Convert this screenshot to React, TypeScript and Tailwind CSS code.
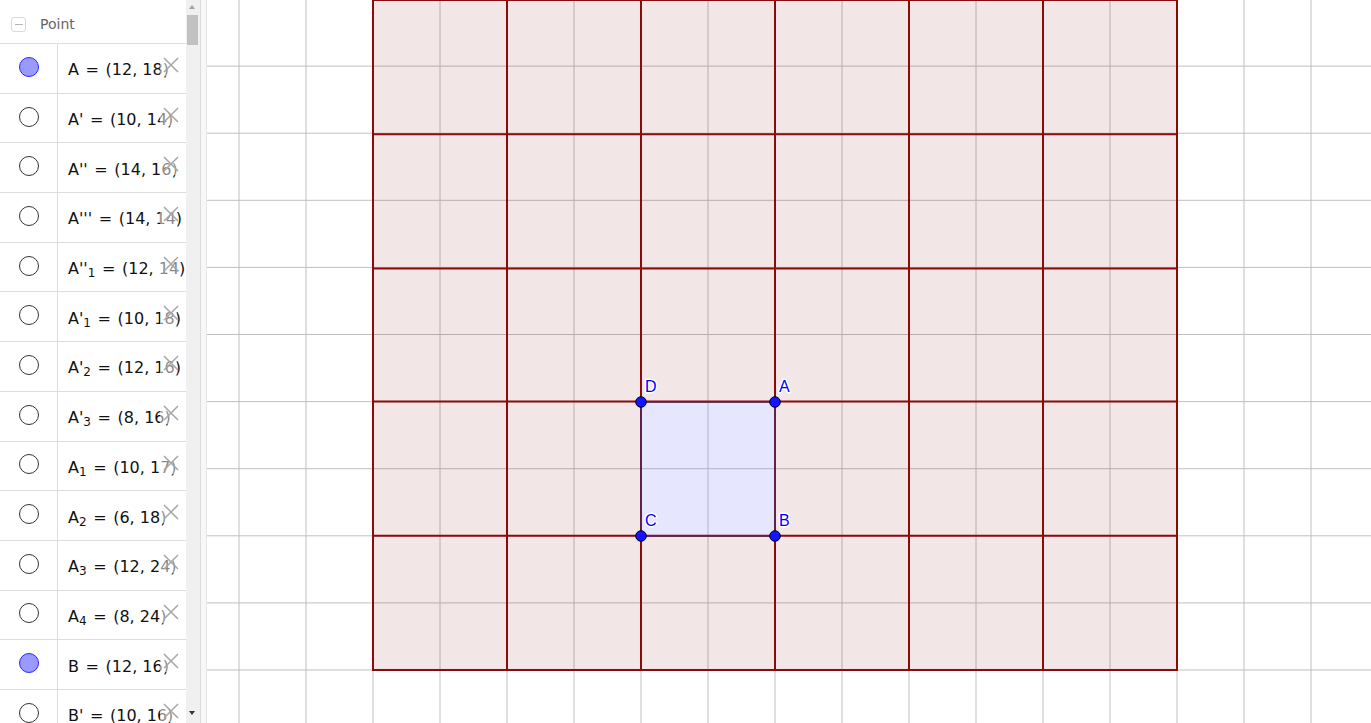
import React from 'react';

type Row = {
  name: string;
  primes?: string;
  sub?: string;
  coords: string;
  shown?: boolean;
};

const rows: Row[] = [
  { name: 'A', coords: '(12, 18)', shown: true },
  { name: 'A', primes: "'", coords: '(10, 14)' },
  { name: 'A', primes: "''", coords: '(14, 16)' },
  { name: 'A', primes: "'''", coords: '(14, 14)' },
  { name: 'A', primes: "''", sub: '1', coords: '(12, 14)' },
  { name: 'A', primes: "'", sub: '1', coords: '(10, 18)' },
  { name: 'A', primes: "'", sub: '2', coords: '(12, 16)' },
  { name: 'A', primes: "'", sub: '3', coords: '(8, 16)' },
  { name: 'A', sub: '1', coords: '(10, 17)' },
  { name: 'A', sub: '2', coords: '(6, 18)' },
  { name: 'A', sub: '3', coords: '(12, 24)' },
  { name: 'A', sub: '4', coords: '(8, 24)' },
  { name: 'B', coords: '(12, 16)', shown: true },
  { name: 'B', primes: "'", coords: '(10, 16)' },
];

const STEP_X = 67;
const STEP_Y = 67.1;
const vLines = Array.from({ length: 17 }, (_, k) => 239 + STEP_X * k);
const hLines = Array.from({ length: 10 }, (_, k) => 670 - STEP_Y * k);
const redV = [373, 507, 641, 775, 909, 1043, 1177];
const redH = [0, 134.2, 268.4, 401.6, 535.8, 670];

const points = [
  { label: 'D', x: 641, y: 402 },
  { label: 'A', x: 775, y: 402 },
  { label: 'C', x: 641, y: 536 },
  { label: 'B', x: 775, y: 536 },
];

function AlgebraRow({ row }: { row: Row }) {
  return (
    <div className="relative flex h-[49.7px] shrink-0 border-b border-[#dddddd]">
      <div className="flex w-[58px] shrink-0 items-center justify-center border-r border-[#dddddd] pb-[3px]">
        {row.shown ? (
          <div className="h-[20px] w-[20px] rounded-full border border-[#2a2aff] bg-[#9999ff]" />
        ) : (
          <div className="h-[20px] w-[20px] rounded-full border-[1.3px] border-[#333333] bg-white" />
        )}
      </div>
      <div className="flex min-w-0 flex-1 items-center overflow-hidden whitespace-nowrap pl-[10px] pt-[4px] text-[16px] leading-[20px] text-[#111]">
        <span>
          {row.name}
          {row.primes}
          {row.sub && <sub className="text-[12px]">{row.sub}</sub>}
          <span className="px-[1.5px]">{' = '}</span>
          {row.coords}
        </span>
      </div>
      <div className="absolute left-[160px] top-[10px] h-[22px] w-[17px] bg-white/50" />
      <svg
        className="absolute left-[163px] top-[13px]"
        width="16"
        height="16"
        viewBox="0 0 16 16"
      >
        <path d="M1 1 L15 15 M15 1 L1 15" stroke="#a6a6a6" strokeWidth="1.5" />
      </svg>
    </div>
  );
}

export default function App() {
  return (
    <div className="flex h-[723px] w-full overflow-hidden bg-white font-['DejaVu_Sans',sans-serif]">
      <div className="flex w-[186px] shrink-0 flex-col">
        <div className="flex h-[44px] shrink-0 items-center gap-[14px] border-b border-[#dddddd] pl-[11px] pt-[6px]">
          <div className="flex h-[15px] w-[15px] items-center justify-center rounded-[3px] border border-[#dadada]">
            <div className="h-px w-[8px] bg-[#b5b5b5]" />
          </div>
          <span className="text-[14px] leading-[17px] text-[#666666]">Point</span>
        </div>
        {rows.map((row, i) => (
          <AlgebraRow key={i} row={row} />
        ))}
      </div>

      <div className="relative w-[14px] shrink-0 bg-[#f0f0f0]">
        <div className="absolute left-[3px] top-[5px] h-0 w-0 border-x-[3.5px] border-b-[4px] border-x-transparent border-b-[#a3a3a3]" />
        <div className="absolute left-[1px] top-[15px] h-[30px] w-[11px] bg-[#c1c1c1]" />
        <div className="absolute bottom-[8px] left-[3px] h-0 w-0 border-x-[3.5px] border-t-[4px] border-x-transparent border-t-[#333333]" />
      </div>
      <div className="w-px shrink-0 bg-[#dcdcdc]" />
      <div className="w-[5px] shrink-0 bg-[#f7f7f7]" />
      <div className="w-px shrink-0 bg-[#e6e6e6]" />

      <div className="min-w-0 flex-1">
        <svg width="1164" height="723" viewBox="207 0 1164 723" className="block">
          <rect x="207" y="0" width="1164" height="723" fill="#ffffff" />
          {vLines.map((x) => (
            <line key={'v' + x} x1={x} y1={0} x2={x} y2={723} stroke="#c0c0c0" strokeWidth="1" />
          ))}
          {hLines.map((y) => (
            <line key={'h' + y} x1={207} y1={y} x2={1371} y2={y} stroke="#c0c0c0" strokeWidth="1" />
          ))}
          {/* translated copies, shaded with the original square left out */}
          <path
            d="M373 0 H1177 V670 H373 Z M641 402 V536 H775 V402 Z"
            fillRule="evenodd"
            fill="rgba(139,10,10,0.1)"
          />
          <rect x="641" y="402" width="134" height="134" fill="rgba(102,102,255,0.16)" />
          {redV.map((x) => (
            <line key={'rv' + x} x1={x} y1={0} x2={x} y2={671} stroke="#8b0a0a" strokeWidth="2" />
          ))}
          {redH.map((y) => (
            <line key={'rh' + y} x1={372} y1={y} x2={1178} y2={y} stroke="#8b0a0a" strokeWidth="2" />
          ))}
          <rect x="641" y="402" width="134" height="134" fill="none" stroke="#55285a" strokeWidth="1.6" />
          {points.map((p) => (
            <g key={p.label}>
              <circle cx={p.x} cy={p.y} r="5.3" fill="#1414ff" stroke="#000022" strokeWidth="1" />
              <text
                x={p.x + 4}
                y={p.y - 10}
                fontFamily="'Liberation Sans', Arial, sans-serif"
                fontSize="16"
                fill="#0000ff"
                stroke="#ffffff"
                strokeWidth="3"
                paintOrder="stroke"
                strokeLinejoin="round"
              >
                {p.label}
              </text>
            </g>
          ))}
        </svg>
      </div>
    </div>
  );
}
